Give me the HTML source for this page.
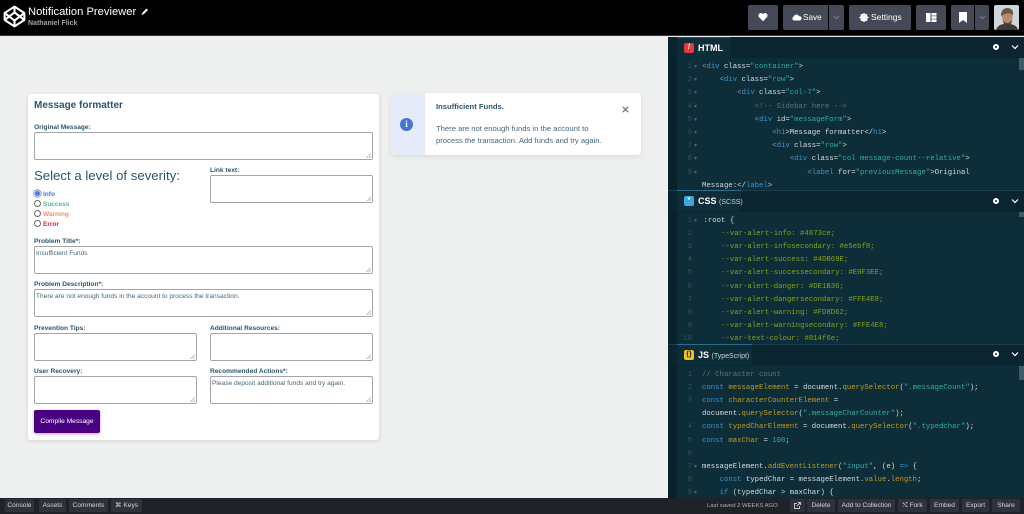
<!DOCTYPE html>
<html><head><meta charset="utf-8"><style>
*{box-sizing:border-box}
html,body{margin:0;padding:0}
body{width:1024px;height:514px;overflow:hidden;position:relative;background:#eef0ef;font-family:"Liberation Sans",sans-serif}
.a{position:absolute}
#top{left:0;top:0;width:1024px;height:36px;background:#000;border-bottom:1px solid #333}
.btn{position:absolute;top:5px;height:25px;background:#444857;border-radius:2px;color:#fff;font-size:8.5px;line-height:25px;text-align:center}
#card{left:28px;top:94px;width:351px;height:346px;background:#fff;border-radius:3px;box-shadow:0 1px 4px rgba(0,0,0,.12)}
.l{position:absolute;font-size:6.6px;font-weight:bold;color:#2a566d;white-space:pre;line-height:8px}
.t{position:absolute;background:#fff;border:1px solid #a5a5a5;border-radius:2px;font-size:6.6px;color:#46667a;padding:3px 1px;line-height:8px;white-space:pre}
.t:after{content:"";position:absolute;right:1px;bottom:1px;width:5px;height:5px;background:linear-gradient(135deg,transparent 50%,#aaa 50%,#aaa 60%,transparent 60%,transparent 75%,#aaa 75%,#aaa 85%,transparent 85%)}
.r{position:absolute;left:34px;width:7px;height:7px;border:.8px solid #666;border-radius:50%;background:#fff}
.rl{position:absolute;left:43px;font-size:6.5px;font-weight:bold;line-height:8px}
#ide{left:668px;top:37px;width:356px;height:461px;background:#0d2d39}
.strip{position:absolute;left:0;width:9px;background:#08222c}
.hd{position:absolute;left:0;width:356px;height:21px;background:#0a2530}
.tab{position:absolute;left:9px;top:0;height:21px;background:#0d2d39;color:#fff;font-weight:bold;font-size:9px;line-height:20px;padding-left:21px;white-space:pre}
.tab i{font-style:normal;font-weight:normal;font-size:7px;color:#c8d2d6}
.ic{position:absolute;left:7px;top:5px;width:10px;height:10px;border-radius:2px;font:bold 7px/10px "Liberation Sans",sans-serif;text-align:center}
.code{position:absolute;font:7.32px/13.2px "Liberation Mono",monospace;color:#d3dcdf;white-space:pre;left:34px}
.num{position:absolute;left:9px;width:15px;text-align:right;font:7.32px/13.2px "Liberation Mono",monospace;color:#38545f;white-space:pre}
.ar{position:absolute;left:26px;margin-top:-1px;font:6px/13.2px "DejaVu Sans",sans-serif;color:#4a6672;white-space:pre}
.b{color:#3a94d0}.s{color:#2fb0a5}.c{color:#5f757d}.g{color:#86a21c}.o{color:#c39a1e}.k{color:#3a94d0}.p{color:#8d9ea5}
.sb{position:absolute;right:0;width:5px;background:#3d5a66}
#bot{left:0;top:498px;width:1024px;height:16px;background:#1f2228}
.bb{position:absolute;top:1px;height:13px;background:#2e323b;border-radius:1px;color:#d5d7db;font-size:6.6px;line-height:13px;text-align:center;white-space:pre}
</style></head><body>
<div id="top" class="a">
<svg class="a" style="left:3px;top:5px" width="23" height="23" viewBox="0 0 21 21" fill="none" stroke="#fff" stroke-width="1.9" stroke-linejoin="round"><path d="M10.500 1.500L19.500 7.300V13.700L10.500 19.500L1.500 13.700V7.300Z"/><path d="M10.500 1.500V6.800M10.500 14.200V19.500M1.500 7.300L10.500 14.200L19.500 7.300M1.500 13.700L10.500 6.800L19.500 13.700"/></svg>
<div class="a" style="left:28px;top:4px;font-size:11.200px;line-height:16px;color:#fff;white-space:pre">Notification Previewer</div>
<svg class="a" style="left:141px;top:7px" width="8" height="9" viewBox="0 0 8 9"><path d="M.5 8L1.500 5.500L5.500 1.500L7 3L3 7Z" fill="#fff"/></svg>
<div class="a" style="left:28px;top:18px;font-size:7px;line-height:11px;color:#a0a3ab;font-weight:bold;white-space:pre">Nathaniel Flick</div>
<div class="btn" style="left:748px;width:30px"><svg style="margin-top:7px" width="10" height="10" viewBox="0 0 10 10"><path d="M5 9.200L.9 5A2.500 2.500 0 0 1 5 2.100 2.500 2.500 0 0 1 9.100 5Z" fill="#fff"/></svg></div>
<div class="btn" style="left:783px;width:45px;text-align:left;padding-left:20px;font-size:8.200px;border-radius:2px 0 0 2px">Save<svg class="a" style="left:8px;top:9px" width="11" height="7" viewBox="0 0 13 8"><path d="M3 7.500A2.500 2.500 0 0 1 3 3 3.500 3.500 0 0 1 9.500 2.500 2.500 2.500 0 0 1 10.500 7.500Z" fill="#fff"/></svg></div>
<div class="btn" style="left:829px;width:15px;border-radius:0 2px 2px 0"><svg style="margin-top:10px" width="7" height="5" viewBox="0 0 7 5" fill="none" stroke="#777b88" stroke-width="1.200"><path d="M1 1L3.500 3.500L6 1"/></svg></div>
<div class="btn" style="left:849px;width:62px;text-align:left;padding-left:22px">Settings<svg class="a" style="left:10px;top:7px" width="10" height="11" viewBox="0 0 11 11"><circle cx="5.500" cy="5.500" r="3.200" fill="none" stroke="#fff" stroke-width="2"/><path d="M5.500 .5V10.500M.5 5.500H10.500M2 2L9 9M9 2L2 9" stroke="#fff" stroke-width="1.500"/></svg></div>
<div class="btn" style="left:916px;width:30px"><svg style="margin-top:7px" width="11" height="11" viewBox="0 0 11 11" fill="#fff"><rect x="0" y="1" width="4.500" height="9"/><rect x="5.500" y="1" width="5" height="2.600"/><rect x="5.500" y="4.200" width="5" height="2.600"/><rect x="5.500" y="7.400" width="5" height="2.600"/></svg></div>
<div class="btn" style="left:951px;width:23px;border-radius:2px 0 0 2px"><svg style="margin-top:7px" width="8" height="11" viewBox="0 0 8 11"><path d="M0 0H8V11L4 8L0 11Z" fill="#fff"/></svg></div>
<div class="btn" style="left:975px;width:14px;border-radius:0 2px 2px 0"><svg style="margin-top:10px" width="7" height="5" viewBox="0 0 7 5" fill="none" stroke="#777b88" stroke-width="1.200"><path d="M1 1L3.500 3.500L6 1"/></svg></div>
<svg class="a" style="left:994px;top:5px;border-radius:2px" width="25" height="25" viewBox="0 0 25 25"><rect width="25" height="25" fill="#cfd6da"/><path d="M7 9Q12 1 19 8L18 17Q13 20 9 16Z" fill="#b98a6c"/><path d="M7 11Q7 3 14 3Q20 4 19 10Q14 6 7 11Z" fill="#6a5547"/><path d="M9 15Q13 21 18 15L17 20L10 20Z" fill="#5a473c"/><path d="M2 25Q4 19 11 19L16 19Q23 20 24 25Z" fill="#3f3a3e"/></svg>
</div>

<div id="card" class="a"></div>
<div class="a" style="left:34px;top:100px;font-size:10px;font-weight:bold;color:#2a566d;line-height:12px;white-space:pre">Message formatter</div>
<div class="l" style="left:34px;top:124px">Original Message:</div>
<div class="t" style="left:34px;top:132px;width:339px;height:28px"></div>
<div class="a" style="left:34px;top:167px;font-size:13.200px;line-height:17px;color:#2a566d;white-space:pre">Select a level of severity:</div>
<div class="l" style="left:210px;top:167px">Link text:</div>
<div class="t" style="left:210px;top:175px;width:163px;height:28px"></div>
<div class="r" style="top:190px;background:#4a7fe0;border:1.500px solid #cfdcf5;box-shadow:0 0 0 .7px #6b8ccc"></div><div class="rl" style="top:191px;color:#4873ce">Info</div>
<div class="r" style="top:200px"></div><div class="rl" style="top:201px;color:#4db69e">Success</div>
<div class="r" style="top:210px"></div><div class="rl" style="top:211px;color:#fd8d62">Warning</div>
<div class="r" style="top:220px"></div><div class="rl" style="top:221px;color:#de1b36">Error</div>
<div class="l" style="left:34px;top:238px">Problem Title*:</div>
<div class="t" style="left:34px;top:246px;width:339px;height:28px">Insufficient Funds</div>
<div class="l" style="left:34px;top:281px">Problem Description*:</div>
<div class="t" style="left:34px;top:289px;width:339px;height:28px">There are not enough funds in the account to process the transaction.</div>
<div class="l" style="left:34px;top:325px">Prevention Tips:</div>
<div class="t" style="left:34px;top:333px;width:163px;height:28px"></div>
<div class="l" style="left:210px;top:325px">Additional Resources:</div>
<div class="t" style="left:210px;top:333px;width:163px;height:28px"></div>
<div class="l" style="left:34px;top:368px">User Recovery:</div>
<div class="t" style="left:34px;top:376px;width:163px;height:28px"></div>
<div class="l" style="left:210px;top:368px">Recommended Actions*:</div>
<div class="t" style="left:210px;top:376px;width:163px;height:28px">Please deposit additional funds and try again.</div>
<div class="a" style="left:34px;top:410px;width:66px;height:23px;background:#4b0082;border-radius:2px;box-shadow:0 1px 3px rgba(75,0,130,.35);color:#fff;font-size:6.650px;line-height:23px;text-align:center;white-space:pre">Compile Message</div>

<div class="a" style="left:391px;top:93px;width:250px;height:62px;background:#fff;border-radius:4px;box-shadow:0 2px 6px rgba(0,0,0,.08);overflow:hidden"><div class="a" style="left:0;top:0;width:34px;height:62px;background:#e5ebf8"></div></div>
<div class="a" style="left:400px;top:118px;width:13px;height:13px;border-radius:50%;background:#4873ce;color:#fff;font:bold 9px/13px 'Liberation Serif',serif;text-align:center">i</div>
<div class="a" style="left:436px;top:102px;font-size:7.650px;font-weight:bold;color:#2a566d;line-height:10px;white-space:pre">Insufficient Funds.</div>
<div class="a" style="left:436px;top:123px;font-size:7.650px;color:#46667a;line-height:11.600px;white-space:pre">There are not enough funds in the account to
process the transaction. Add funds and try again.</div>
<svg class="a" style="left:622px;top:106px" width="7" height="7" viewBox="0 0 7 7"><path d="M.8 .8L6.200 6.200M6.200 .8L.8 6.200" stroke="#777" stroke-width="1.300"/></svg>

<div id="ide" class="a">
<div class="strip" style="top:0;height:461px"></div>
<!-- HTML -->
<div class="hd" style="top:0"></div>
<div class="tab" style="top:0;width:53px;border-top:1px solid #2c4f5c"><span class="ic" style="background:#e5383f;color:#fff">/</span>HTML</div>
<div class="num" style="top:24px">1
2
3
4
5
6
7
8
9</div>
<div class="ar" style="top:24px">▾
▾
▾
▾
▾
▾
▾
▾
▾</div>
<div class="code" style="top:24px"><span class="p">&lt;</span><span class="b">div</span> class=<span class="s">"container"</span>&gt;
    <span class="p">&lt;</span><span class="b">div</span> class=<span class="s">"row"</span>&gt;
        <span class="p">&lt;</span><span class="b">div</span> class=<span class="s">"col-7"</span>&gt;
            <span class="c">&lt;!-- Sidebar here --&gt;</span>
            <span class="p">&lt;</span><span class="b">div</span> id=<span class="s">"messageForm"</span>&gt;
                <span class="p">&lt;</span><span class="b">h1</span>&gt;Message formatter&lt;/<span class="b">h1</span>&gt;
                <span class="p">&lt;</span><span class="b">div</span> class=<span class="s">"row"</span>&gt;
                    <span class="p">&lt;</span><span class="b">div</span> class=<span class="s">"col message-count--relative"</span>&gt;
                        <span class="p">&lt;</span><span class="b">label</span> for=<span class="s">"previousMessage"</span>&gt;Original
Message:&lt;/<span class="b">label</span>&gt;</div>
<div class="sb" style="top:21px;height:12px"></div>
<!-- CSS -->
<div class="a" style="left:0;top:153px;width:356px;height:1px;background:#1d3f4c"></div>
<div class="hd" style="top:154px"></div>
<div class="tab" style="top:153px;width:64px;border-top:1px solid #2c6d8a"><span class="ic" style="background:#3aa7e0;color:#fff">*</span>CSS <i>(SCSS)</i></div>
<div class="num" style="top:177.500px">1
2
3
4
5
6
7
8
9
10</div>
<div class="ar" style="top:177.500px">▾</div>
<div class="code" style="top:177.500px;left:35.500px;height:130px;overflow:hidden">:root {
    <span class="g">--var-alert-info: #4873ce;</span>
    <span class="g">--var-alert-infosecondary: #e5ebf8;</span>
    <span class="g">--var-alert-success: #4DB69E;</span>
    <span class="g">--var-alert-successecondary: #E0F3EE;</span>
    <span class="g">--var-alert-danger: #DE1B36;</span>
    <span class="g">--var-alert-dangersecondary: #FFE4E8;</span>
    <span class="g">--var-alert-warning: #FD8D62;</span>
    <span class="g">--var-alert-warningsecondary: #FFE4E8;</span>
    <span class="g">--var-text-colour: #814f6e;</span></div>
<div class="sb" style="top:175px;height:5px"></div>
<!-- JS -->
<div class="a" style="left:0;top:307px;width:356px;height:1px;background:#1d3f4c"></div>
<div class="hd" style="top:308px"></div>
<div class="tab" style="top:307px;width:75px;border-top:1px solid #2c6d8a"><span class="ic" style="background:#f2c21a;color:#0a2530">{}</span>JS <i>(TypeScript)</i></div>
<div class="num" style="top:331.500px">1
2
3

4
5
6
7
8
9</div>
<div class="ar" style="top:331.500px">






▾

▾</div>
<div class="code" style="top:331.500px;height:129.500px;overflow:hidden"><span class="c">// Character count</span>
<span class="k">const</span> <span class="o">messageElement</span> = document.<span class="o">querySelector</span>(<span class="s">".messageCount"</span>);
<span class="k">const</span> <span class="o">characterCounterElement</span> =
document.<span class="o">querySelector</span>(<span class="s">".messageCharCounter"</span>);
<span class="k">const</span> <span class="o">typedCharElement</span> = document.<span class="o">querySelector</span>(<span class="s">".typedchar"</span>);
<span class="k">const</span> <span class="o">maxChar</span> = <span class="s">100</span>;

messageElement.<span class="o">addEventListener</span>(<span class="s">"input"</span>, (e) <span class="k">=&gt;</span> {
    <span class="k">const</span> typedChar = messageElement.<span class="o">value</span>.<span class="o">length</span>;
    <span class="k">if</span> (typedChar &gt; maxChar) {</div>
<div class="sb" style="top:329px;height:14px"></div>
<svg class="a" style="left:324px;top:6px" width="28" height="8" viewBox="0 0 28 8"><circle cx="4" cy="4" r="2" fill="none" stroke="#fff" stroke-width="2"/><path d="M20 2.500L23 5.500L26 2.500" fill="none" stroke="#fff" stroke-width="1.200"/></svg>
<svg class="a" style="left:324px;top:160px" width="28" height="8" viewBox="0 0 28 8"><circle cx="4" cy="4" r="2" fill="none" stroke="#fff" stroke-width="2"/><path d="M20 2.500L23 5.500L26 2.500" fill="none" stroke="#fff" stroke-width="1.200"/></svg>
<svg class="a" style="left:324px;top:313px" width="28" height="8" viewBox="0 0 28 8"><circle cx="4" cy="4" r="2" fill="none" stroke="#fff" stroke-width="2"/><path d="M20 2.500L23 5.500L26 2.500" fill="none" stroke="#fff" stroke-width="1.200"/></svg>
</div>

<div id="bot" class="a">
<div class="bb" style="left:5px;width:29px">Console</div>
<div class="bb" style="left:39px;width:27px">Assets</div>
<div class="bb" style="left:69px;width:39px">Comments</div>
<div class="bb" style="left:111px;width:31px">⌘ Keys</div>
<div class="a" style="left:707px;top:2px;font-size:5.900px;line-height:13px;color:#aeb1b8;white-space:pre">Last saved 2 WEEKS AGO</div>
<div class="bb" style="left:790px;width:15px"><svg style="margin-top:3px" width="7" height="7" viewBox="0 0 7 7" fill="none" stroke="#c8cad0" stroke-width=".9"><path d="M5.500 4V6.500H.5V1.500H3M3 4L6.500 .5M4 .5H6.500V3"/></svg></div>
<div class="bb" style="left:807px;width:28px">Delete</div>
<div class="bb" style="left:838px;width:57px">Add to Collection</div>
<div class="bb" style="left:898px;width:29px">⤭ Fork</div>
<div class="bb" style="left:930px;width:29px">Embed</div>
<div class="bb" style="left:962px;width:27px">Export</div>
<div class="bb" style="left:992px;width:28px">Share</div>
</div>
</body></html>
